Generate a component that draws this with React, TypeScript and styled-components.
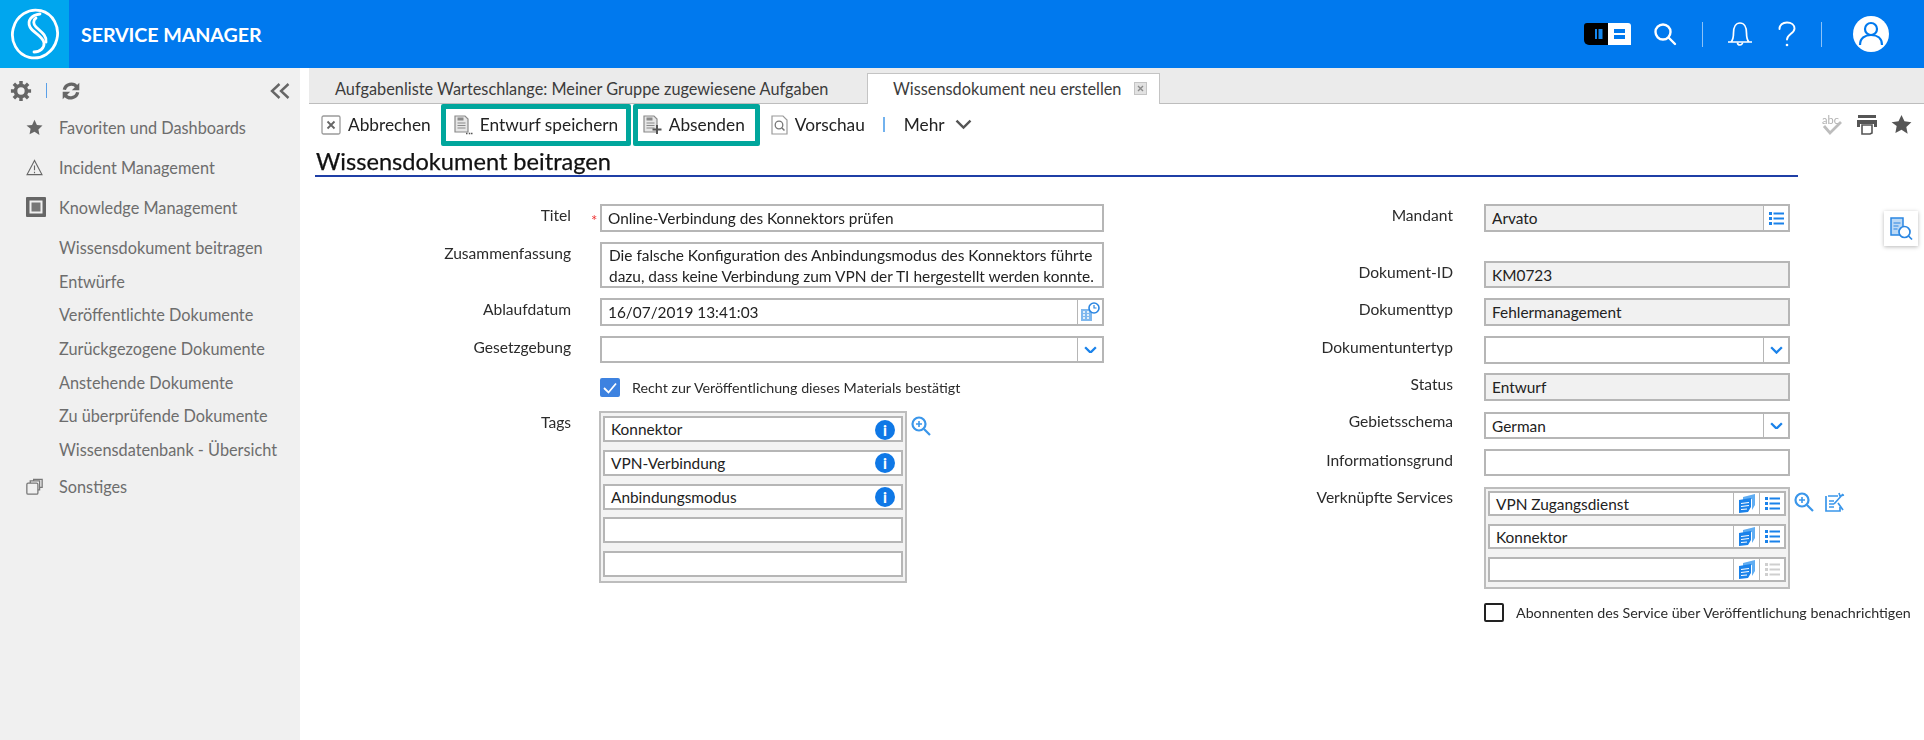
import React from 'react';
import styled, { createGlobalStyle } from 'styled-components';

const GlobalStyle = createGlobalStyle`
  html, body {
    margin: 0;
    padding: 0;
    background: #fff;
    font-family: 'Lato', 'Open Sans', sans-serif;
  }
  * { box-sizing: border-box; }
`;

const Page = styled.div`
  width: 1924px;
  height: 740px;
  display: flex;
  flex-direction: column;
  overflow: hidden;
  filter: blur(0.35px);
`;

/* header */
const Header = styled.header`
  height: 68px;
  flex: none;
  display: flex;
  align-items: center;
  background: #0079ee;
  color: #fff;
  padding-right: 35px;
`;
const LogoBlock = styled.div`
  width: 69px;
  height: 68px;
  background: #00a6ee;
  display: flex;
  align-items: center;
  justify-content: center;
`;
const Brand = styled.div`
  margin-left: 12px;
  font-size: 19.7px;
  font-weight: 700;
  letter-spacing: -0.1px;
`;
const HeaderTools = styled.div`
  margin-left: auto;
  display: flex;
  align-items: center;
`;
const HeaderTool = styled.div<{ $ml: number }>`
  margin-left: ${p => p.$ml}px;
  display: flex;
  align-items: center;
`;
const HeaderSep = styled.div<{ $ml: number }>`
  margin-left: ${p => p.$ml}px;
  width: 1px;
  height: 25px;
  background: rgba(255, 255, 255, 0.55);
`;

const Body = styled.div`
  flex: 1;
  display: flex;
  min-height: 0;
`;

/* sidebar */
const Sidebar = styled.aside`
  width: 300px;
  flex: none;
  background: #f0f0f0;
  color: #6d6d6d;
`;
const SideTop = styled.div`
  height: 39px;
  display: flex;
  align-items: center;
  padding: 6px 10px 0;
`;
const SideSep = styled.div`
  width: 1px;
  height: 15px;
  margin: 0 14px;
  background: #5aa0e8;
`;
const Collapse = styled.div`
  margin-left: auto;
  display: flex;
`;
const NavItem = styled.div`
  height: 40px;
  display: flex;
  align-items: center;
  font-size: 16.3px;
`;
const NavIcon = styled.div`
  width: 59px;
  padding-left: 26px;
  display: flex;
  align-items: center;
`;
const SubList = styled.div`
  padding-top: 4px;
`;
const SubItem = styled.div`
  height: 33.7px;
  line-height: 33.7px;
  padding-left: 59px;
  font-size: 16.3px;
`;

/* main */
const Main = styled.main`
  flex: 1;
  position: relative;
  min-width: 0;
`;
const TabBar = styled.div`
  height: 36px;
  margin-left: 9px;
  background: #ebebeb;
  border-bottom: 1px solid #bdbdbd;
  display: flex;
  align-items: flex-end;
  padding-left: 26px;
  font-size: 16.3px;
  color: #3c3c3c;
`;
const Tab = styled.div`
  height: 26px;
  line-height: 24px;
  width: 532px;
`;
const ActiveTab = styled.div`
  width: 293px;
  height: 31px;
  margin-bottom: -1px;
  background: #fff;
  border: 1px solid #c4c4c4;
  border-bottom: none;
  display: flex;
  align-items: center;
  padding: 0 12px 2px 25px;
  justify-content: space-between;
`;
const Toolbar = styled.div`
  height: 43px;
  padding: 0 12px 2px 21px;
  display: flex;
  align-items: center;
  font-size: 17.3px;
  color: #222;
`;
const ToolButton = styled.div<{ $ml?: number; $gap?: number }>`
  display: flex;
  align-items: center;
  gap: ${p => p.$gap ?? 7}px;
  margin-left: ${p => p.$ml ?? 0}px;
`;
const HighlightBox = styled.div<{ $w: number; $ml: number; $pl: number }>`
  width: ${p => p.$w}px;
  height: 42px;
  margin-left: ${p => p.$ml}px;
  border: 5px solid #00a69c;
  border-radius: 2px;
  padding-left: ${p => p.$pl}px;
  display: flex;
  align-items: center;
  gap: 7px;
`;
const ToolSep = styled.div`
  width: 2px;
  height: 15px;
  margin: 0 19px 0 18px;
  background: #72b2ee;
`;
const ToolRight = styled.div`
  margin-left: auto;
  display: flex;
  align-items: center;
  gap: 14px;
`;
const Title = styled.h1`
  margin: 0 126px 0 15px;
  height: 30px;
  padding: 1px 0 0 1px;
  border-bottom: 2px solid #1f3fa6;
  font-size: 23.6px;
  line-height: 27px;
  font-weight: 400;
  color: #111;
  -webkit-text-stroke: 0.25px #111;
`;

/* form */
const Form = styled.div`
  display: flex;
  padding-top: 27px;
`;
const Column = styled.div<{ $w: number }>`
  width: ${p => p.$w}px;
  flex: none;
  display: flex;
  flex-direction: column;
  gap: 10px;
`;
const Row = styled.div<{ $label: number; $gap: number; $mt?: number }>`
  display: grid;
  grid-template-columns: ${p => p.$label}px 1fr;
  column-gap: ${p => p.$gap}px;
  margin-top: ${p => p.$mt ?? 0}px;
`;
const Label = styled.div<{ $pt?: number }>`
  text-align: right;
  font-size: 15.6px;
  line-height: 18px;
  padding-top: ${p => p.$pt ?? 2}px;
  color: #2b2b2b;
`;
const FieldLine = styled.div<{ $w: number }>`
  display: flex;
  align-items: flex-start;
  width: ${p => p.$w}px;
  position: relative;
`;
const Field = styled.div<{ $h?: number; $ro?: boolean }>`
  flex: 1 0 auto;
  height: ${p => p.$h ?? 28}px;
  border: 2px solid #b6b6b6;
  background: ${p => (p.$ro ? '#f1f1f1' : '#fff')};
  display: flex;
  align-items: stretch;
  font-size: 15.4px;
  color: #222;
`;
const FieldText = styled.div`
  flex: 1;
  padding: 0 6px;
  display: flex;
  align-items: center;
  white-space: nowrap;
  min-width: 0;
`;
const SummaryText = styled.div`
  padding: 1px 7px;
  font-size: 15.45px;
  line-height: 21px;
  white-space: nowrap;
`;
const Addon = styled.div<{ $w?: number }>`
  width: ${p => p.$w ?? 25}px;
  flex: none;
  background: #fff;
  border-left: 1px solid #b6b6b6;
  display: flex;
  align-items: center;
  justify-content: center;
`;
const Required = styled.span`
  position: absolute;
  left: -9px;
  top: 7px;
  color: #e33;
  font-size: 15px;
  line-height: 18px;
`;
const CheckLine = styled.div<{ $mt: number; $gap: number }>`
  display: flex;
  align-items: center;
  gap: ${p => p.$gap}px;
  margin-top: ${p => p.$mt}px;
  font-size: 14.28px;
  color: #2b2b2b;
  white-space: nowrap;
`;
const CheckBox = styled.div<{ $checked?: boolean }>`
  width: 20px;
  height: 19px;
  flex: none;
  border-radius: 2px;
  display: flex;
  align-items: center;
  justify-content: center;
  background: ${p => (p.$checked ? '#3d82e0' : '#fff')};
  border: ${p => (p.$checked ? 'none' : '2px solid #222')};
`;
const MultiBox = styled.div<{ $w: number; $rowGap: number; $pb: number; $pt: number }>`
  width: ${p => p.$w}px;
  flex: none;
  border: 2px solid #bdbdbd;
  background: #f3f3f3;
  padding: ${p => p.$pt}px 2px ${p => p.$pb}px;
  display: flex;
  flex-direction: column;
  gap: ${p => p.$rowGap}px;
`;
const MultiRow = styled(Field)`
  flex: none;
`;
const SideIcons = styled.div`
  display: flex;
  gap: 11px;
  margin: 5px 0 0 4px;
`;
const FloatingButton = styled.div`
  position: absolute;
  left: 1584px;
  top: 143px;
  width: 34px;
  height: 35px;
  background: #fff;
  box-shadow: 0 1px 4px rgba(0, 0, 0, 0.28);
  display: flex;
  align-items: center;
  justify-content: center;
`;
const InfoBadge = styled.div`
  width: 20px;
  height: 20px;
  margin: 1px 6px 0 0;
  border-radius: 50%;
  background: #0f78e6;
  color: #fff;
  font-size: 15px;
  font-weight: 900;
  line-height: 20px;
  text-align: center;
  align-self: center;
`;

/* icons */
const Logo = () => (
  <svg width="52" height="54" viewBox="0 0 52 54" fill="none" stroke="#fff" strokeWidth="2.8" strokeLinecap="round">
    <ellipse cx="26" cy="27" rx="22.5" ry="24" transform="rotate(14 26 27)" />
    <path d="M31 7c-9 1-13 7-10 13 3 6 13 9 14 16 .6 5-4 9-10 9" />
    <path d="M27 11c-3 2-3 6 0 9 4 4 11 8 10 15" />
  </svg>
);
const Gear = () => (
  <svg width="22" height="22" viewBox="0 0 24 24" fill="none" stroke="#666">
    <circle cx="12" cy="12" r="6" strokeWidth="4" />
    <path d="M12 1v5M12 18v5M1 12h5M18 12h5M4.2 4.2 8 8M16 16l3.800 3.800M4.200 19.800 8 16M16 8l3.800-3.800" strokeWidth="3.800" />
  </svg>
);
const Refresh = () => (
  <svg width="20" height="20" viewBox="0 0 24 24" fill="none" stroke="#666" strokeWidth="4">
    <path d="M4 10.500a8.500 8.500 0 0 1 15-3.500" />
    <path d="M20 13.500a8.500 8.500 0 0 1-15 3.500" />
    <path d="M22 2v9h-9z" fill="#666" stroke="none" />
    <path d="M2 22v-9h9z" fill="#666" stroke="none" />
  </svg>
);
const DoubleLeft = () => (
  <svg width="20" height="16" viewBox="0 0 20 16" fill="none" stroke="#666" strokeWidth="2.4">
    <path d="M9.5 1 2 8l7.5 7M18.5 1 11 8l7.5 7" />
  </svg>
);
const Star = ({ size = 17, color = '#666' }: { size?: number; color?: string }) => (
  <svg width={size} height={size} viewBox="0 0 24 24" fill={color}>
    <path d="m12 1 3.4 7.3 7.9 1-5.8 5.5 1.5 7.9L12 18l-7 3.7 1.5-7.9L.7 9.3l7.9-1z" />
  </svg>
);
const Warning = () => (
  <svg width="17" height="17" viewBox="0 0 24 24" fill="none" stroke="#666" strokeWidth="1.6">
    <path d="M12 2 1.5 22h21z" />
    <path d="M12 9v7M12 18v2" />
  </svg>
);
const KnowledgeIcon = () => (
  <svg width="20" height="20" viewBox="0 0 20 20">
    <rect width="20" height="20" rx="1" fill="#666" />
    <rect x="3.5" y="3.5" width="13" height="13" fill="#f0f0f0" />
    <rect x="5.5" y="5.5" width="9" height="9" fill="#777" />
  </svg>
);
const Stack = () => (
  <svg width="17" height="17" viewBox="0 0 20 20" fill="none" stroke="#777" strokeWidth="1.5">
    <rect x="1" y="6" width="13" height="13" rx="1.5" />
    <path d="M5 6V3.5h11V14h-2M9 3.5V1.5h10V11h-3" />
  </svg>
);
const BadgeIcon = () => (
  <svg width="47" height="22" viewBox="0 0 47 22">
    <path d="M3 0h21v22H5a5 5 0 0 1-5-5V3a3 3 0 0 1 3-3z" fill="#000" />
    <path d="M24 0h20a3 3 0 0 1 3 3v19H24z" fill="#fff" />
    <rect x="11" y="6" width="2" height="10" fill="#1587ee" />
    <rect x="14.5" y="6" width="4" height="10" fill="#1587ee" />
    <rect x="30" y="6" width="11" height="4" fill="#0079ee" />
    <rect x="30" y="12" width="11" height="4" fill="#0079ee" />
  </svg>
);
const SearchIcon = () => (
  <svg width="24" height="24" viewBox="0 0 24 24" fill="none" stroke="#fff" strokeWidth="2.4" strokeLinecap="round">
    <circle cx="10" cy="10" r="7.5" />
    <path d="m16 16 6 6" />
  </svg>
);
const Bell = () => (
  <svg width="26" height="26" viewBox="0 0 26 26" fill="none" stroke="#fff" strokeWidth="1.7">
    <path d="M1 21h24M4 21c2-2 2.500-4 2.500-9C6.500 6 9 2 13 2s6.500 4 6.500 10c0 5 .5 7 2.500 9" />
    <path d="M10.500 21.500a2.500 2.500 0 0 0 5 0" />
  </svg>
);
const Help = () => (
  <svg width="18" height="26" viewBox="0 0 18 26" fill="none" stroke="#fff" strokeWidth="1.9" strokeLinecap="round">
    <path d="M1.500 8C1.500 4 4.500 1.500 9 1.500s7.500 2.500 7.500 6c0 5-7.500 5.500-7.500 11" />
    <circle cx="9" cy="24" r="1.300" fill="#fff" stroke="none" />
  </svg>
);
const Avatar = () => (
  <svg width="36" height="36" viewBox="0 0 36 36">
    <circle cx="18" cy="18" r="18" fill="#fff" />
    <circle cx="18" cy="13" r="6" fill="none" stroke="#0079ee" strokeWidth="2.2" />
    <path d="M7 29c0-7 5-10 11-10s11 3 11 10" fill="none" stroke="#0079ee" strokeWidth="2.2" />
  </svg>
);
const CloseBox = () => (
  <svg width="13" height="13" viewBox="0 0 13 13" fill="none">
    <rect x=".5" y=".5" width="12" height="12" fill="#e2e2e2" stroke="#c4c4c4" />
    <path d="m4 4 5 5M9 4 4 9" stroke="#8a8a8a" strokeWidth="1.4" />
  </svg>
);
const CancelIcon = () => (
  <svg width="20" height="20" viewBox="0 0 20 20" fill="none">
    <rect x="1" y="1" width="18" height="18" rx="1.5" stroke="#9a9a9a" strokeWidth="1.300" />
    <path d="m6.500 6.500 7 7M13.500 6.500l-7 7" stroke="#666" strokeWidth="1.800" />
  </svg>
);
const DocShape = () => (
  <>
    <path d="M1 1h10l3 3v13H1z" fill="#e6e6e6" stroke="#8a8a8a" strokeWidth="1.200" />
    <rect x="3.500" y="2.500" width="6" height="3" fill="#8a8a8a" />
    <path d="M3.500 8h8M3.500 10.500h8M3.500 13h8" stroke="#8a8a8a" strokeWidth="1" />
  </>
);
const SaveDraftIcon = () => (
  <svg width="19" height="20" viewBox="0 0 19 20">
    <DocShape />
    <path d="M12 18.500h1.500M14.800 18.500h1.500M17 18.500h1.500" stroke="#555" strokeWidth="1.500" />
  </svg>
);
const SubmitIcon = () => (
  <svg width="19" height="20" viewBox="0 0 19 20">
    <DocShape />
    <path d="M14 10v9M9.500 14.500h9" stroke="#555" strokeWidth="2" />
  </svg>
);
const PreviewIcon = () => (
  <svg width="17" height="20" viewBox="0 0 17 20" fill="none">
    <path d="M1 1h11l4 4v14H1z" stroke="#9a9a9a" strokeWidth="1.200" />
    <circle cx="8" cy="10" r="3.800" stroke="#777" strokeWidth="1.300" />
    <path d="m11 13 2.500 2.500" stroke="#777" strokeWidth="1.500" />
  </svg>
);
const ChevronDown = ({ size = 17, color = '#555', sw = 2.4 }: { size?: number; color?: string; sw?: number }) => (
  <svg width={size} height={size * 0.6} viewBox="0 0 17 10" fill="none" stroke={color} strokeWidth={sw}>
    <path d="m1.500 1.500 7 7 7-7" />
  </svg>
);
const SpellIcon = () => (
  <svg width="22" height="24" viewBox="0 0 22 24" fill="none">
    <text x="1" y="11" fontSize="11" fontFamily="Lato, sans-serif" fill="#b0b0b0">abc</text>
    <path d="m3 13 6 7L20 9" stroke="#bdbdbd" strokeWidth="2.800" />
  </svg>
);
const PrintIcon = () => (
  <svg width="20" height="20" viewBox="0 0 20 20">
    <rect x="1" y="0" width="18" height="3" fill="#555" />
    <path d="M0 5h20v7h-3V9H3v3H0z" fill="#555" />
    <path d="M5 10h10v8l-2 1H5z" fill="#fff" stroke="#555" strokeWidth="1.600" />
  </svg>
);
const ListIcon = ({ color = '#1a82ea' }: { color?: string }) => (
  <svg width="15" height="13" viewBox="0 0 15 13" fill={color}>
    <rect x="0" y="0" width="3" height="3" />
    <rect x="4.500" y="0.500" width="10.500" height="2" />
    <rect x="0" y="5" width="3" height="3" />
    <rect x="4.500" y="5.500" width="10.500" height="2" />
    <rect x="0" y="10" width="3" height="3" />
    <rect x="4.500" y="10.500" width="10.500" height="2" />
  </svg>
);
const CalendarClock = () => (
  <svg width="20" height="20" viewBox="0 0 20 20" fill="none">
    <path d="M1 7h11v12H1z" fill="#7fb8ee" />
    <path d="M3 10h2M7 10h2M3 13h2M7 13h2M3 16h2M7 16h2" stroke="#fff" strokeWidth="1.500" />
    <circle cx="14" cy="6" r="5" fill="#fff" stroke="#2a86e2" strokeWidth="1.600" />
    <path d="M14 3v3h2.500" stroke="#2a86e2" strokeWidth="1.200" />
  </svg>
);
const ZoomPlus = () => (
  <svg width="20" height="20" viewBox="0 0 20 20" fill="none" stroke="#3a96ea" strokeWidth="2.200">
    <circle cx="8" cy="8" r="6.500" />
    <path d="m13 13 6 6" />
    <path d="M5 8h6M8 5v6" strokeWidth="1.600" />
  </svg>
);
const EditList = () => (
  <svg width="21" height="20" viewBox="0 0 21 20" fill="none" stroke="#3a96ea" strokeWidth="1.700">
    <path d="M3 4h10M1 4v15h14v-4" />
    <path d="M4 9h5M4 12h5M4 15h5" />
    <path d="m9 12 9-10M14 1l1 3 4-1M13 11l5 7" />
  </svg>
);
const CopyDocs = () => (
  <svg width="18" height="19" viewBox="0 0 18 19">
    <path d="M5 3 17 0v11l-3 5V5L5 7z" fill="#60adf2" />
    <path d="M1 6 13 4v9l-3 5-9 1z" fill="#1a82ea" />
    <path d="M3 9.500 11 8.500M3 12.500 11 11.500M3 15.500 9 15" stroke="#fff" strokeWidth="1.200" />
  </svg>
);
const DocSearch = () => (
  <svg width="24" height="25" viewBox="0 0 24 25" fill="none">
    <path d="M2 2h12v17H2z" fill="#bcd9f5" stroke="#2a86e2" strokeWidth="1.500" />
    <path d="M4.500 7h7M4.500 10h5M4.500 13h4" stroke="#2a86e2" strokeWidth="1.200" />
    <circle cx="15.500" cy="16" r="5.500" fill="#fff" stroke="#2a86e2" strokeWidth="1.700" />
    <path d="m19.500 20 3.500 3.500" stroke="#2a86e2" strokeWidth="1.700" />
  </svg>
);
const Tick = () => (
  <svg width="14" height="12" viewBox="0 0 14 12" fill="none" stroke="#fff" strokeWidth="1.800">
    <path d="m1 6 4.500 4.500L13 1.500" />
  </svg>
);

const subItems = [
  'Wissensdokument beitragen',
  'Entwürfe',
  'Veröffentlichte Dokumente',
  'Zurückgezogene Dokumente',
  'Anstehende Dokumente',
  'Zu überprüfende Dokumente',
  'Wissensdatenbank - Übersicht',
];

const tags = ['Konnektor', 'VPN-Verbindung', 'Anbindungsmodus', '', ''];
const services = ['VPN Zugangsdienst', 'Konnektor', ''];

const App: React.FC = () => {
  return (
    <Page>
      <GlobalStyle />
      <Header>
        <LogoBlock>
          <Logo />
        </LogoBlock>
        <Brand>SERVICE MANAGER</Brand>
        <HeaderTools>
          <HeaderTool $ml={0}><BadgeIcon /></HeaderTool>
          <HeaderTool $ml={22}><SearchIcon /></HeaderTool>
          <HeaderSep $ml={25} />
          <HeaderTool $ml={24}><Bell /></HeaderTool>
          <HeaderTool $ml={25}><Help /></HeaderTool>
          <HeaderSep $ml={25} />
          <HeaderTool $ml={31}><Avatar /></HeaderTool>
        </HeaderTools>
      </Header>
      <Body>
        <Sidebar>
          <SideTop>
            <Gear />
            <SideSep />
            <Refresh />
            <Collapse><DoubleLeft /></Collapse>
          </SideTop>
          <NavItem><NavIcon><Star /></NavIcon>Favoriten und Dashboards</NavItem>
          <NavItem><NavIcon><Warning /></NavIcon>Incident Management</NavItem>
          <NavItem><NavIcon><KnowledgeIcon /></NavIcon>Knowledge Management</NavItem>
          <SubList>
            {subItems.map(item => <SubItem key={item}>{item}</SubItem>)}
          </SubList>
          <NavItem><NavIcon><Stack /></NavIcon>Sonstiges</NavItem>
        </Sidebar>
        <Main>
          <TabBar>
            <Tab>Aufgabenliste Warteschlange: Meiner Gruppe zugewiesene Aufgaben</Tab>
            <ActiveTab>Wissensdokument neu erstellen <CloseBox /></ActiveTab>
          </TabBar>
          <Toolbar>
            <ToolButton><CancelIcon />Abbrechen</ToolButton>
            <HighlightBox $w={190} $ml={10} $pl={8}><SaveDraftIcon />Entwurf speichern</HighlightBox>
            <HighlightBox $w={127} $ml={2} $pl={5}><SubmitIcon />Absenden</HighlightBox>
            <ToolButton $ml={11}><PreviewIcon />Vorschau</ToolButton>
            <ToolSep />
            <ToolButton $gap={10}>Mehr <ChevronDown /></ToolButton>
            <ToolRight>
              <SpellIcon />
              <PrintIcon />
              <Star size={21} color="#555" />
            </ToolRight>
          </Toolbar>
          <Title>Wissensdokument beitragen</Title>
          <Form>
            <Column $w={904}>
              <Row $label={271} $gap={29}>
                <Label>Titel</Label>
                <FieldLine $w={504}>
                  <Required>*</Required>
                  <Field><FieldText>Online-Verbindung des Konnektors prüfen</FieldText></Field>
                </FieldLine>
              </Row>
              <Row $label={271} $gap={29}>
                <Label>Zusammenfassung</Label>
                <FieldLine $w={504}>
                  <Field $h={46}>
                    <SummaryText>
                      Die falsche Konfiguration des Anbindungsmodus des Konnektors führte<br />
                      dazu, dass keine Verbindung zum VPN der TI hergestellt werden konnte.
                    </SummaryText>
                  </Field>
                </FieldLine>
              </Row>
              <Row $label={271} $gap={29}>
                <Label>Ablaufdatum</Label>
                <FieldLine $w={504}>
                  <Field>
                    <FieldText>16/07/2019 13:41:03</FieldText>
                    <Addon><CalendarClock /></Addon>
                  </Field>
                </FieldLine>
              </Row>
              <Row $label={271} $gap={29}>
                <Label>Gesetzgebung</Label>
                <FieldLine $w={504}>
                  <Field $h={27}>
                    <FieldText />
                    <Addon><ChevronDown size={13} color="#1a82ea" sw={3} /></Addon>
                  </Field>
                </FieldLine>
              </Row>
              <Row $label={271} $gap={29}>
                <span />
                <CheckLine $mt={5} $gap={12}>
                  <CheckBox $checked><Tick /></CheckBox>
                  Recht zur Veröffentlichung dieses Materials bestätigt
                </CheckLine>
              </Row>
              <Row $label={271} $gap={28} $mt={4}>
                <Label>Tags</Label>
                <FieldLine $w={345}>
                  <MultiBox $w={308} $pt={3} $rowGap={7.75} $pb={4}>
                    {tags.map((tag, i) => (
                      <MultiRow key={i} $h={26}>
                        <FieldText>{tag}</FieldText>
                        {tag && <InfoBadge>i</InfoBadge>}
                      </MultiRow>
                    ))}
                  </MultiBox>
                  <SideIcons><ZoomPlus /></SideIcons>
                </FieldLine>
              </Row>
            </Column>
            <Column $w={600}>
              <Row $label={249} $gap={31}>
                <Label>Mandant</Label>
                <FieldLine $w={306}>
                  <Field $ro>
                    <FieldText>Arvato</FieldText>
                    <Addon><ListIcon /></Addon>
                  </Field>
                </FieldLine>
              </Row>
              <Row $label={249} $gap={31} $mt={19}>
                <Label>Dokument-ID</Label>
                <FieldLine $w={306}><Field $ro $h={27}><FieldText>KM0723</FieldText></Field></FieldLine>
              </Row>
              <Row $label={249} $gap={31}>
                <Label>Dokumenttyp</Label>
                <FieldLine $w={306}><Field $ro><FieldText>Fehlermanagement</FieldText></Field></FieldLine>
              </Row>
              <Row $label={249} $gap={31}>
                <Label>Dokumentuntertyp</Label>
                <FieldLine $w={306}>
                  <Field>
                    <FieldText />
                    <Addon><ChevronDown size={13} color="#1a82ea" sw={3} /></Addon>
                  </Field>
                </FieldLine>
              </Row>
              <Row $label={249} $gap={31} $mt={-1}>
                <Label>Status</Label>
                <FieldLine $w={306}><Field $ro><FieldText>Entwurf</FieldText></Field></FieldLine>
              </Row>
              <Row $label={249} $gap={31} $mt={1}>
                <Label $pt={0}>Gebietsschema</Label>
                <FieldLine $w={306}>
                  <Field $h={27}>
                    <FieldText>German</FieldText>
                    <Addon><ChevronDown size={13} color="#1a82ea" sw={3} /></Addon>
                  </Field>
                </FieldLine>
              </Row>
              <Row $label={249} $gap={31}>
                <Label>Informationsgrund</Label>
                <FieldLine $w={306}><Field $h={27}><FieldText /></Field></FieldLine>
              </Row>
              <Row $label={249} $gap={31} $mt={1}>
                <Label $pt={1}>Verknüpfte Services</Label>
                <FieldLine $w={370}>
                  <MultiBox $w={306} $pt={2} $rowGap={8} $pb={5}>
                    {services.map((service, i) => (
                      <MultiRow key={i} $h={25}>
                        <FieldText>{service}</FieldText>
                        <Addon $w={26}><CopyDocs /></Addon>
                        <Addon><ListIcon color={service ? '#1a82ea' : '#cfcfcf'} /></Addon>
                      </MultiRow>
                    ))}
                  </MultiBox>
                  <SideIcons><ZoomPlus /><EditList /></SideIcons>
                </FieldLine>
              </Row>
              <Row $label={249} $gap={31} $mt={4}>
                <span />
                <CheckLine $mt={0} $gap={12}>
                  <CheckBox />
                  Abonnenten des Service über Veröffentlichung benachrichtigen
                </CheckLine>
              </Row>
            </Column>
          </Form>
          <FloatingButton><DocSearch /></FloatingButton>
        </Main>
      </Body>
    </Page>
  );
};

export default App;
